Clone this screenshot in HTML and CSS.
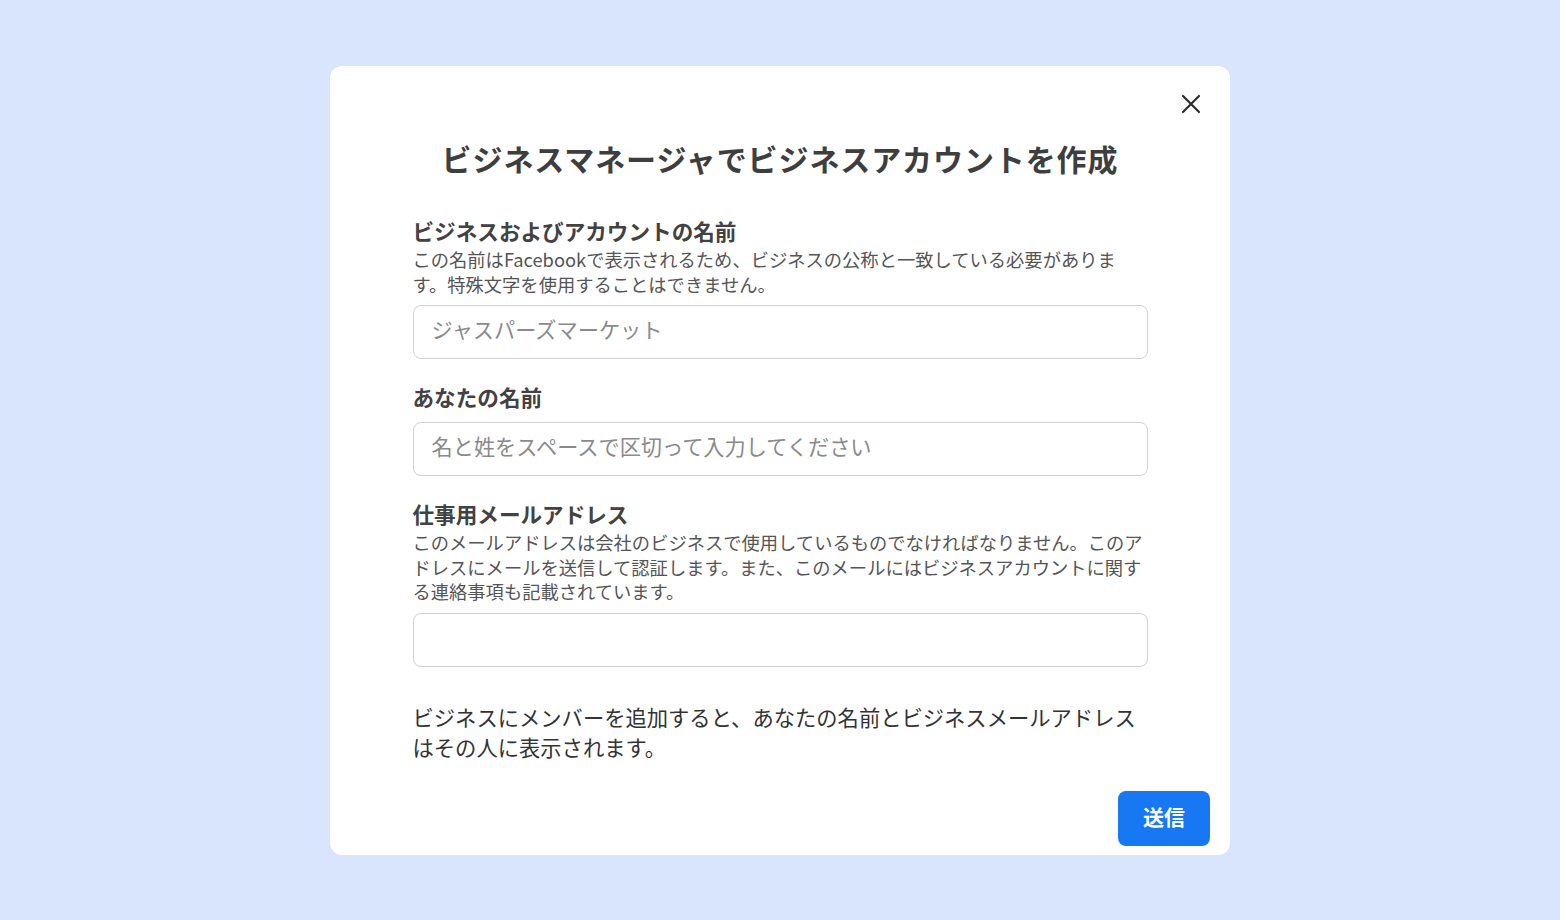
FILE: index.html
```html
<!DOCTYPE html>
<html lang="ja">
<head>
  <meta charset="UTF-8" />
  <meta name="viewport" content="width=device-width, initial-scale=1.0" />
  <title>ビジネスアカウントを作成</title>
  <link rel="stylesheet" href="styles.css">
</head>
<body>

  <div class="modal">
    <button class="close-btn" aria-label="閉じる">
      <svg width="20" height="20" viewBox="0 0 20 20">
        <path d="M2 2 L18 18 M18 2 L2 18" stroke="#2b2b2b" stroke-width="2.2" stroke-linecap="round" fill="none" />
      </svg>
    </button>

    <h1 class="modal-title">ビジネスマネージャでビジネスアカウントを作成</h1>

    <form class="form">
      <div class="field">
        <label class="field-label" for="bizName">ビジネスおよびアカウントの名前</label>
        <p class="field-desc">この名前はFacebookで表示されるため、ビジネスの公称と一致している必要がありま<br>す。特殊文字を使用することはできません。</p>
        <input class="field-input" id="bizName" type="text" placeholder="ジャスパーズマーケット" />
      </div>

      <div class="field">
        <label class="field-label" for="yourName">あなたの名前</label>
        <input class="field-input" id="yourName" type="text" placeholder="名と姓をスペースで区切って入力してください" />
      </div>

      <div class="field">
        <label class="field-label" for="workEmail">仕事用メールアドレス</label>
        <p class="field-desc">このメールアドレスは会社のビジネスで使用しているものでなければなりません。このアドレスにメールを送信して認証します。また、このメールにはビジネスアカウントに関する連絡事項も記載されています。</p>
        <input class="field-input" id="workEmail" type="email" />
      </div>

      <p class="notice">ビジネスにメンバーを追加すると、あなたの名前とビジネスメールアドレスはその人に表示されます。</p>

      <div class="actions">
        <button class="submit-btn" type="button">送信</button>
      </div>
    </form>
  </div>

</body>
</html>
```

FILE: styles.css
```css
:root {
  --bg-blue: #d8e5fd;
  --card-bg: #ffffff;
  --text-title: #3e3e3e;
  --text-label: #424242;
  --text-desc: #555555;
  --text-body: #333333;
  --border: #d0d0d0;
  --placeholder: #8a8a8a;
  --blue-primary: #1877f2;
}

* {
  box-sizing: border-box;
}

body {
  margin: 0;
  padding: 66px 0 0;
  font-family: "Noto Sans CJK JP", "Noto Sans", sans-serif;
  background-color: var(--bg-blue);
  min-height: 100vh;
  display: flex;
  justify-content: center;
  align-items: flex-start;
}

.modal {
  position: relative;
  width: 900px;
  background-color: var(--card-bg);
  border-radius: 12px;
  padding: 70px 20px 9px;
}

/* botão de fechar fica sobre o canto do card */
.close-btn {
  position: absolute;
  top: 28px;
  right: 29px;
  width: 20px;
  height: 20px;
  padding: 0;
  border: none;
  background: none;
  cursor: pointer;
  display: block;
}

.close-btn svg {
  display: block;
}

.modal-title {
  margin: 0;
  text-align: center;
  font-size: 30px;
  line-height: 44px;
  font-weight: 700;
  letter-spacing: 0.9px;
  color: var(--text-title);
}

.form {
  margin-top: 37px;
}

.field {
  width: 735px;
  margin: 0 auto 24px;
  display: flex;
  flex-direction: column;
}

.field-label {
  font-size: 21.6px;
  line-height: 28px;
  font-weight: 700;
  color: var(--text-label);
}

.field-desc {
  margin: 2px 0 0;
  font-size: 18.3px;
  line-height: 24.5px;
  color: var(--text-desc);
}

.field-input {
  margin-top: 9px;
  width: 100%;
  height: 54px;
  border: 1.5px solid var(--border);
  border-radius: 8px;
  padding: 0 18px 7px;
  font-family: inherit;
  font-size: 21.2px;
  color: var(--text-body);
  outline: none;
}

/* campo sem descrição: um pouco mais de espaço abaixo do rótulo */
.field-label + .field-input {
  margin-top: 11px;
}

.field-input::placeholder {
  color: var(--placeholder);
}

.field-input:focus {
  border-color: var(--blue-primary);
}

.notice {
  width: 735px;
  margin: 35px auto 0;
  font-size: 21.3px;
  line-height: 30px;
  color: var(--text-body);
}

.actions {
  display: flex;
  justify-content: flex-end;
  margin-top: 29px;
}

.submit-btn {
  width: 92px;
  height: 55px;
  border: none;
  border-radius: 8px;
  padding: 0 0 5px;
  background-color: var(--blue-primary);
  color: white;
  font-family: inherit;
  font-size: 21px;
  font-weight: 700;
  cursor: pointer;
}
```
